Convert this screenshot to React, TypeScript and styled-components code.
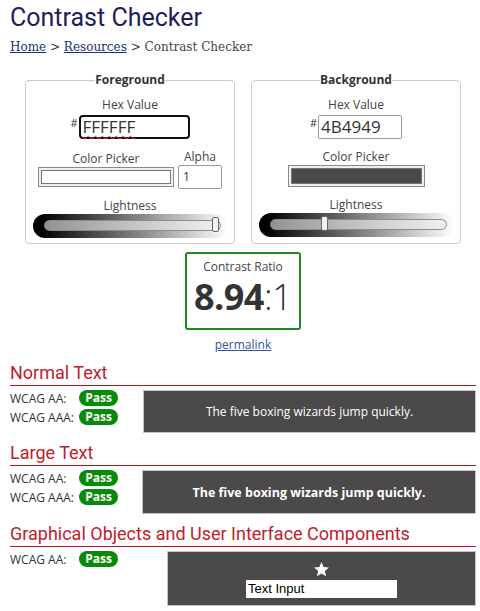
import React from 'react';
import styled, { createGlobalStyle } from 'styled-components';

const GlobalStyle = createGlobalStyle`
  body {
    margin: 0;
    background: #ffffff;
    font-family: 'Open Sans', sans-serif;
    color: #333333;
  }
`;

const Page = styled.div`
  width: 480px;
  box-sizing: border-box;
  padding: 3px 4px 0 10px;
`;

const Title = styled.h1`
  margin: 0;
  font-family: 'Roboto', sans-serif;
  font-size: 25px;
  font-weight: 400;
  line-height: 30px;
  color: #1e1e5a;
`;

const Crumbs = styled.div`
  margin-top: 5px;
  font-family: 'DejaVu Serif', serif;
  font-size: 12px;
  line-height: 18px;
  color: #444444;

  a {
    color: #22306e;
    text-decoration: underline;
  }
`;

const Pickers = styled.div`
  display: flex;
  gap: 16px;
  margin-top: 16px;
  padding-left: 15px;
`;

const Panel = styled.fieldset`
  margin: 0;
  width: 210px;
  box-sizing: border-box;
  padding: 0 0 5px;
  border: 1px solid #cccccc;
  border-radius: 4px;
  display: flex;
  flex-direction: column;
  align-items: center;
`;

const Legend = styled.legend`
  margin: 0 auto;
  padding: 0;
  font-size: 12px;
  font-weight: 700;
  line-height: 16px;
  color: #333333;
`;

const Label = styled.div`
  font-size: 12px;
  line-height: 16px;
  color: #444444;
  text-align: center;
`;

const HexLabel = styled(Label)`
  margin-top: 9px;
`;

const HexRow = styled.div`
  margin-top: 2px;
  display: flex;
  align-items: flex-start;
`;

const Hash = styled.span`
  font-size: 11px;
  line-height: 11px;
  margin-right: 1px;
  margin-top: 2px;
`;

const HexInput = styled.div<{ focused?: boolean }>`
  box-sizing: border-box;
  height: 24px;
  width: ${(p) => (p.focused ? '111px' : '84px')};
  border: ${(p) => (p.focused ? '2px solid #111111' : '1px solid #9a9a9a')};
  border-radius: ${(p) => (p.focused ? '4px' : '2px')};
  padding-left: 2px;
  font-size: 17px;
  line-height: ${(p) => (p.focused ? '20px' : '22px')};
  color: #333333;

  span {
    text-decoration: ${(p) => (p.focused ? 'underline wavy #e05050 1px' : 'none')};
    text-underline-offset: 2px;
  }
`;

const PickerRow = styled.div`
  margin-top: 10px;
  display: flex;
  gap: 4px;
  align-items: flex-end;
`;

const PickerCol = styled.div`
  display: flex;
  flex-direction: column;
  align-items: center;
`;

const Swatch = styled.div<{ color: string; wide?: boolean }>`
  box-sizing: border-box;
  width: ${(p) => (p.wide ? '137px' : '136px')};
  height: ${(p) => (p.wide ? '22px' : '20px')};
  margin-bottom: ${(p) => (p.wide ? '1px' : '2px')};
  border: 1px solid #8a8a8a;
  background: #efefef;
  padding: 2px;

  &::after {
    content: '';
    display: block;
    height: 100%;
    box-sizing: border-box;
    border: 1px solid #777777;
    background: ${(p) => p.color};
  }
`;

const AlphaInput = styled.div`
  box-sizing: border-box;
  width: 44px;
  height: 24px;
  border: 1px solid #9a9a9a;
  border-radius: 2px;
  padding-left: 4px;
  font-size: 12px;
  line-height: 22px;
  color: #333333;
`;

const LightLabel = styled(Label)`
  margin-top: 9px;
`;

const Lightness = styled.div`
  box-sizing: border-box;
  width: 195px;
  height: 24px;
  border-radius: 12px;
  background: linear-gradient(to right, #000000 4%, #ffffff 100%);
  padding: 6px 7px 0 11px;
`;

const Track = styled.div`
  position: relative;
  height: 11px;
  box-sizing: border-box;
  border: 1px solid #8c8c8c;
  border-radius: 6px;
  background: linear-gradient(to right, rgba(170, 170, 170, 0.85), rgba(240, 240, 240, 0.9));
`;

const Thumb = styled.div`
  position: absolute;
  top: -4px;
  width: 7px;
  height: 15px;
  box-sizing: border-box;
  border: 1px solid #666666;
  border-radius: 2px;
  background: #f4f4f4;
  margin-left: -4px;
`;

const Ratio = styled.div`
  margin: 8px auto 0;
  width: 116px;
  height: 78px;
  box-sizing: border-box;
  border: 2px solid #1f8a1f;
  border-radius: 3px;
  padding-top: 5px;
  text-align: center;
`;

const RatioValue = styled.div`
  font-size: 36px;
  line-height: 36px;
  margin-top: 4px;
  color: #333333;
  letter-spacing: -0.5px;

  b {
    font-weight: 700;
  }
  span {
    font-weight: 300;
  }
`;

const Permalink = styled.a`
  display: block;
  margin-top: 7px;
  text-align: center;
  font-size: 12px;
  line-height: 16px;
  color: #3552a8;
  text-decoration: underline;
`;

const Section = styled.section`
  margin-top: 9px;
`;

const SectionTitle = styled.h2`
  margin: 0;
  font-family: 'Roboto', sans-serif;
  font-size: 18px;
  font-weight: 400;
  line-height: 22px;
  color: #c0202c;
  padding-bottom: 1px;
  border-bottom: 1px solid #b5141e;
`;

const SectionBody = styled.div<{ labelWidth: number }>`
  margin-top: 4px;
  display: grid;
  grid-template-columns: ${(p) => p.labelWidth}px 1fr;
  align-items: start;
`;

const Results = styled.div`
  display: flex;
  flex-direction: column;
  gap: 3px;
`;

const Result = styled.div`
  display: flex;
  align-items: center;
  height: 16px;
  font-size: 12px;
  color: #333333;
`;

const ResultName = styled.span`
  width: 69px;
`;

const Pass = styled.span`
  display: inline-block;
  width: 39px;
  height: 16px;
  border-radius: 8px;
  background: #0a8a0a;
  color: #ffffff;
  font-size: 12px;
  font-weight: 700;
  line-height: 16px;
  text-align: center;
`;

const Sample = styled.div<{ height: number; bold?: boolean }>`
  box-sizing: border-box;
  height: ${(p) => p.height}px;
  background: #4b4949;
  border: 1px solid #c4c4c4;
  color: #ffffff;
  display: flex;
  flex-direction: column;
  align-items: center;
  justify-content: center;
  font-size: ${(p) => (p.bold ? '12.5px' : '12px')};
  font-weight: ${(p) => (p.bold ? 700 : 400)};
`;

const Star = styled.svg`
  display: block;
  margin-top: 2px;
`;

const TextInput = styled.div`
  margin-top: 2px;
  width: 151px;
  height: 18px;
  background: #ffffff;
  color: #000000;
  font-family: 'Liberation Sans', Arial, sans-serif;
  font-size: 13px;
  line-height: 18px;
  padding-left: 2px;
  box-sizing: border-box;
`;

const Slider: React.FC<{ at: number }> = ({ at }) => (
  <Lightness>
    <Track>
      <Thumb style={{ left: `${at}%` }} />
    </Track>
  </Lightness>
);

const Checks: React.FC<{ names: string[] }> = ({ names }) => (
  <Results>
    {names.map((n) => (
      <Result key={n}>
        <ResultName>{n}</ResultName>
        <Pass>Pass</Pass>
      </Result>
    ))}
  </Results>
);

const App: React.FC = () => {
  return (
    <Page>
      <GlobalStyle />
      <Title>Contrast Checker</Title>
      <Crumbs>
        <a href="#">Home</a> &gt; <a href="#">Resources</a> &gt; Contrast Checker
      </Crumbs>

      <Pickers>
        <Panel>
          <Legend>Foreground</Legend>
          <HexLabel>Hex Value</HexLabel>
          <HexRow>
            <Hash>#</Hash>
            <HexInput focused>
              <span>FFFFFF</span>
            </HexInput>
          </HexRow>
          <PickerRow>
            <PickerCol>
              <Label>Color Picker</Label>
              <Swatch color="#ffffff" />
            </PickerCol>
            <PickerCol>
              <Label>Alpha</Label>
              <AlphaInput>1</AlphaInput>
            </PickerCol>
          </PickerRow>
          <LightLabel>Lightness</LightLabel>
          <Slider at={98} />
        </Panel>
        <Panel>
          <Legend>Background</Legend>
          <HexLabel>Hex Value</HexLabel>
          <HexRow>
            <Hash>#</Hash>
            <HexInput>4B4949</HexInput>
          </HexRow>
          <PickerRow>
            <PickerCol>
              <Label>Color Picker</Label>
              <Swatch color="#4b4949" wide />
            </PickerCol>
          </PickerRow>
          <LightLabel>Lightness</LightLabel>
          <Slider at={31} />
        </Panel>
      </Pickers>

      <Ratio>
        <Label>Contrast Ratio</Label>
        <RatioValue>
          <b>8.94</b>
          <span>:1</span>
        </RatioValue>
      </Ratio>
      <Permalink href="#">permalink</Permalink>

      <Section>
        <SectionTitle>Normal Text</SectionTitle>
        <SectionBody labelWidth={133}>
          <Checks names={['WCAG AA:', 'WCAG AAA:']} />
          <Sample height={43}>The five boxing wizards jump quickly.</Sample>
        </SectionBody>
      </Section>

      <Section>
        <SectionTitle>Large Text</SectionTitle>
        <SectionBody labelWidth={132}>
          <Checks names={['WCAG AA:', 'WCAG AAA:']} />
          <Sample height={44} bold>
            The five boxing wizards jump quickly.
          </Sample>
        </SectionBody>
      </Section>

      <Section>
        <SectionTitle>Graphical Objects and User Interface Components</SectionTitle>
        <SectionBody labelWidth={157}>
          <Checks names={['WCAG AA:']} />
          <Sample height={55}>
            <Star width="17" height="17" viewBox="0 0 24 24">
              <polygon
                points="12,1.5 14.9,8.6 22.5,9.2 16.7,14.1 18.5,21.6 12,17.6 5.5,21.6 7.3,14.1 1.5,9.2 9.1,8.6"
                fill="#ffffff"
              />
            </Star>
            <TextInput>Text Input</TextInput>
          </Sample>
        </SectionBody>
      </Section>
    </Page>
  );
};

export default App;
